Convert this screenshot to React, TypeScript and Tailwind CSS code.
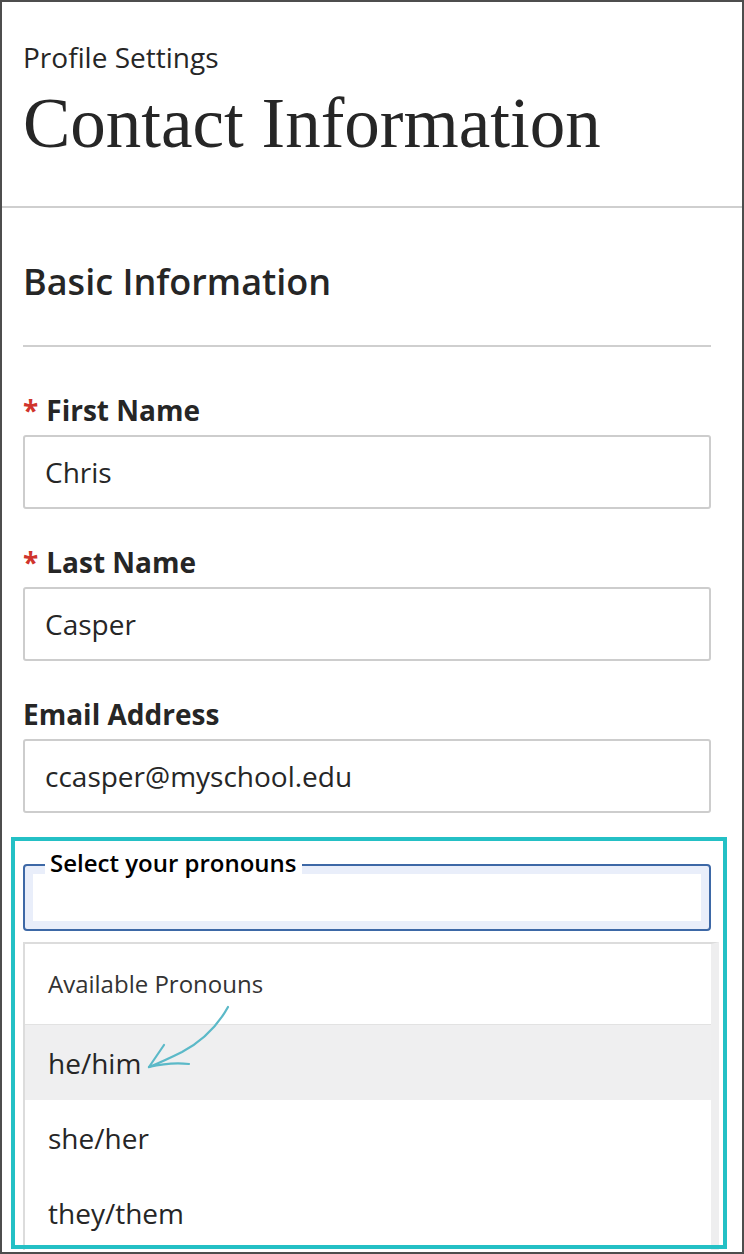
const sans = "font-['Open_Sans','Noto_Sans',sans-serif]";

function Field({ label, value, required }: { label: string; value: string; required?: boolean }) {
  return (
    <div className="flex flex-col">
      <div className="flex h-[36px] items-center gap-[8px] text-[28px] font-bold text-[#262626]">
        {required && <span className="text-[28px] text-[#d0342c]">*</span>}
        <span>{label}</span>
      </div>
      <div className="mt-[7px] flex h-[74px] items-center rounded-[3px] border-2 border-[#cdcdcd] px-[20px] text-[28px] text-[#262626]">
        {value}
      </div>
    </div>
  );
}

export default function App() {
  return (
    <div className={`relative h-[1254px] w-[744px] overflow-hidden border-2 border-[#4d4d4d] bg-white ${sans}`}>
      {/* Page header */}
      <header className="px-[21px] pt-[37px]">
        <p className="text-[28px] leading-[36px] text-[#262626]">Profile Settings</p>
        <h1 className="mt-[8px] font-['Liberation_Serif',serif] text-[71px] leading-[80px] text-[#262626]">
          Contact Information
        </h1>
      </header>
      <div className="mt-[43px] border-b-2 border-[#cfcfcf]" />

      <main className="pl-[21px] pr-[31px]">
        <h2 className="mt-[52px] text-[36px] font-semibold leading-[44px] text-[#262626]">Basic Information</h2>
        <div className="mt-[41px] border-b-2 border-[#cfcfcf]" />

        <div className="mt-[45px] flex flex-col gap-[35px]">
          <Field label="First Name" value="Chris" required />
          <Field label="Last Name" value="Casper" required />
          <Field label="Email Address" value="ccasper@myschool.edu" />
        </div>

        {/* Pronoun picker, open */}
        <div className="relative mt-[51px]">
          <div className="h-[67px] rounded-[4px] border-2 border-[#3d68a6] bg-[#e9eefa] p-[8px]">
            <div className="h-full bg-white" />
          </div>
          <span className="absolute left-[22px] top-[-17px] bg-white px-[5px] text-[24px] font-semibold leading-[32px] text-black">
            Select your pronouns
          </span>

          <ul className="absolute left-0 right-[-8px] top-[78px] border-l-2 border-r-[8px] border-t-2 border-[#dcdcdc] border-r-[#eeeeef] bg-white">
            <li className="flex h-[81px] items-center border-b border-[#e2e2e2] px-[23px] text-[24px] text-[#333]">
              Available Pronouns
            </li>
            <li className="flex h-[75px] items-center bg-[#efeff0] px-[23px] text-[28px] text-[#262626]">he/him</li>
            <li className="flex h-[75px] items-center px-[23px] text-[28px] text-[#262626]">she/her</li>
            <li className="flex h-[75px] items-center px-[23px] text-[28px] text-[#262626]">they/them</li>
          </ul>
        </div>
      </main>

      {/* Annotation: hand-drawn arrow */}
      <svg
        className="absolute left-[138px] top-[998px]"
        width="96"
        height="72"
        viewBox="0 0 96 72"
        fill="none"
        stroke="#5bb9c8"
        strokeWidth="2.2"
        strokeLinecap="round"
        strokeLinejoin="round"
      >
        <path d="M88 7 Q72 36 42 52 Q24 61 9 67" />
        <path d="M9 67 L24 45" />
        <path d="M9 67 Q30 62 49 64" />
      </svg>

      {/* Annotation: highlight frame */}
      <div className="pointer-events-none absolute left-[9px] top-[835px] h-[412px] w-[716px] border-4 border-[#24c0c5]" />
    </div>
  );
}
